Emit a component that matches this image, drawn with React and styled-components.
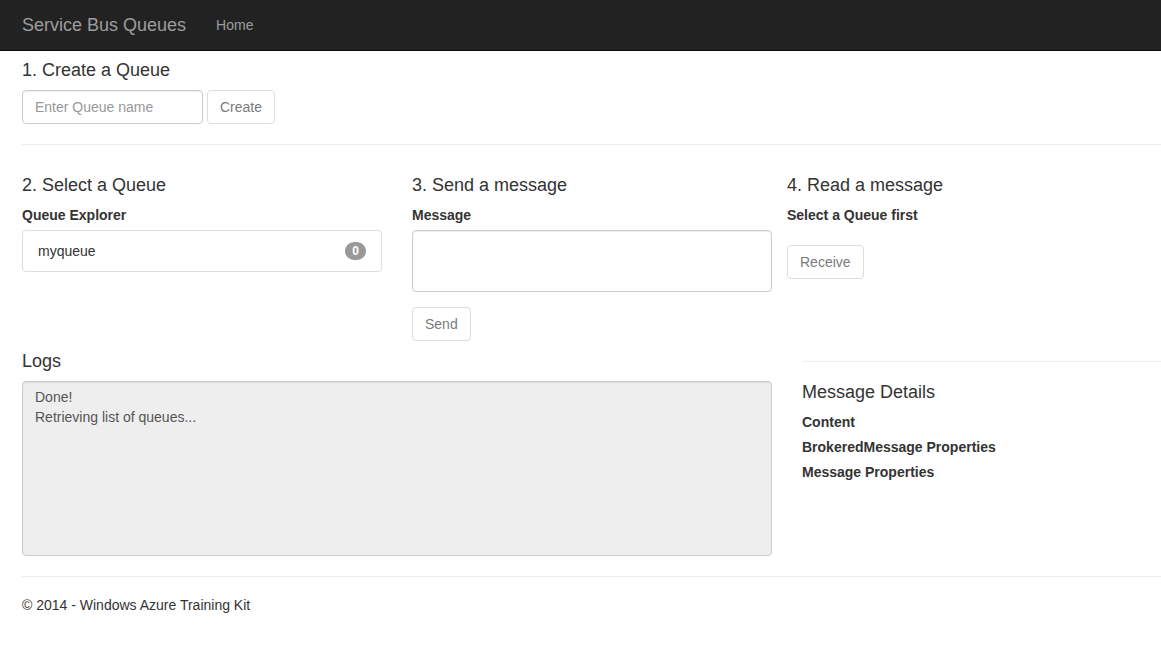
import React from "react";
import styled, { createGlobalStyle } from "styled-components";

const GlobalStyle = createGlobalStyle`
  * { box-sizing: border-box; }
  body {
    margin: 0;
    font-family: "Liberation Sans", Arial, sans-serif;
    font-size: 14px;
    line-height: 20px;
    color: #333;
    background: #fff;
  }
`;

export default function App() {
  return (
    <>
      <GlobalStyle />
      <Navbar>
        <Brand>Service Bus Queues</Brand>
        <NavLink>Home</NavLink>
      </Navbar>
      <Main>
        <Heading $top="9px">1. Create a Queue</Heading>
        <InlineForm>
          <TextInput placeholder="Enter Queue name" />
          <Button>Create</Button>
        </InlineForm>
        <Rule />
        <Row>
          <Col $width="360px" $gap="30px">
            <Heading>2. Select a Queue</Heading>
            <Label>Queue Explorer</Label>
            <ListItem>
              myqueue
              <Badge>0</Badge>
            </ListItem>
          </Col>
          <Col $width="360px" $gap="15px">
            <Heading>3. Send a message</Heading>
            <Label>Message</Label>
            <TextArea />
            <Button $top="15px">Send</Button>
          </Col>
          <Col>
            <Heading>4. Read a message</Heading>
            <Label>Select a Queue first</Label>
            <Button $top="15px">Receive</Button>
          </Col>
        </Row>
        <Row>
          <Col $width="750px" $gap="30px">
            <Heading>Logs</Heading>
            <LogBox>
              <div>Done!</div>
              <div>Retrieving list of queues...</div>
            </LogBox>
          </Col>
          <Col>
            <Rule />
            <Heading $top="0">Message Details</Heading>
            <Label>Content</Label>
            <Label>BrokeredMessage Properties</Label>
            <Label>Message Properties</Label>
          </Col>
        </Row>
        <Rule />
        <Footer>© 2014 - Windows Azure Training Kit</Footer>
      </Main>
    </>
  );
}

const Navbar = styled.nav`
  display: flex;
  align-items: center;
  height: 51px;
  background: #222;
  border-bottom: 1px solid #080808;
  padding-left: 22px;
`;

const Brand = styled.a`
  font-size: 18px;
  line-height: 20px;
  color: #9d9d9d;
  padding-right: 15px;
`;

const NavLink = styled.a`
  font-size: 14px;
  color: #9d9d9d;
  padding: 15px;
`;

const Main = styled.div`
  padding-left: 22px;
`;

const Heading = styled.h4`
  font-size: 18px;
  font-weight: 500;
  line-height: 20px;
  margin: ${(p) => p.$top || "10px"} 0 10px;
`;

const InlineForm = styled.div`
  display: flex;
  gap: 4px;
`;

const TextInput = styled.input`
  width: 181px;
  height: 34px;
  padding: 6px 12px;
  font: inherit;
  color: #555;
  border: 1px solid #ccc;
  border-radius: 4px;
  box-shadow: inset 0 1px 1px rgba(0, 0, 0, 0.075);
  &::placeholder { color: #999; }
`;

const Button = styled.button`
  height: 34px;
  margin-top: ${(p) => p.$top || "0"};
  padding: 6px 12px;
  font: inherit;
  color: #333;
  background: #fff;
  border: 1px solid #ccc;
  border-radius: 4px;
  opacity: 0.65;
  align-self: flex-start;
`;

const Rule = styled.hr`
  margin: 20px 0;
  border: 0;
  border-top: 1px solid #eee;
`;

const Row = styled.div`
  display: flex;
`;

const Col = styled.div`
  display: flex;
  flex-direction: column;
  width: ${(p) => p.$width || "auto"};
  flex: ${(p) => (p.$width ? "none" : "1")};
  margin-right: ${(p) => p.$gap || "0"};
`;

const Label = styled.label`
  display: block;
  font-weight: bold;
  margin-bottom: 5px;
`;

const ListItem = styled.div`
  display: flex;
  justify-content: space-between;
  align-items: center;
  padding: 10px 15px;
  border: 1px solid #ddd;
  border-radius: 4px;
`;

const Badge = styled.span`
  min-width: 21px;
  padding: 2px 7px;
  font-size: 12px;
  font-weight: bold;
  line-height: 14px;
  color: #fff;
  text-align: center;
  background: #999;
  border-radius: 10px;
`;

const TextArea = styled.textarea`
  height: 62px;
  padding: 6px 12px;
  font: inherit;
  border: 1px solid #ccc;
  border-radius: 4px;
  box-shadow: inset 0 1px 1px rgba(0, 0, 0, 0.075);
  resize: none;
`;

const LogBox = styled.div`
  height: 175px;
  padding: 5px 12px;
  color: #555;
  background: #eee;
  border: 1px solid #ccc;
  border-radius: 4px;
  box-shadow: inset 0 1px 1px rgba(0, 0, 0, 0.075);
`;

const Footer = styled.p`
  margin: -2px 0 10px;
`;
